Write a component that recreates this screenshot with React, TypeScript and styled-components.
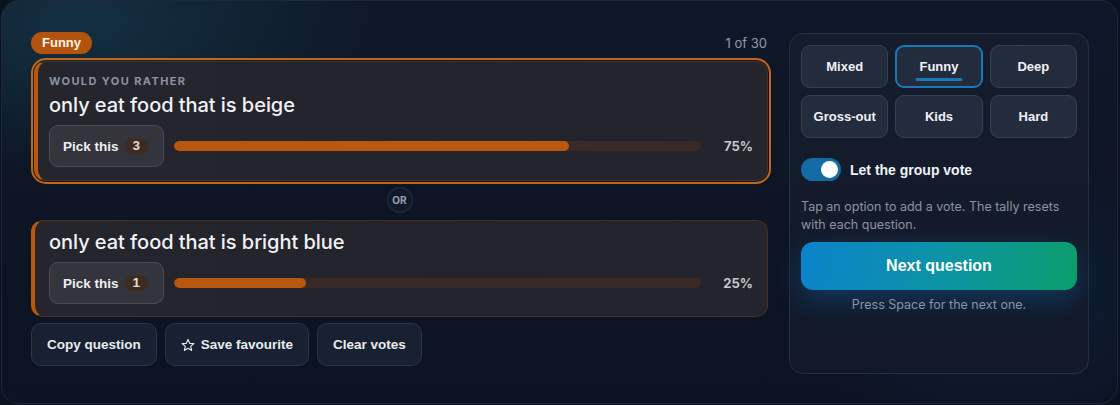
import React from "react";
import styled, { createGlobalStyle } from "styled-components";

const Global = createGlobalStyle`
  html, body { margin: 0; padding: 0; background: #0c1320; }
  body { font-family: "Liberation Sans", Arial, sans-serif; width: 1120px; height: 405px; overflow: hidden; }
  * { box-sizing: border-box; }
`;

const Shell = styled.div`
  margin-left: 1px;
  width: 1117px;
  height: 404px;
  border: 1px solid #1e2838;
  border-radius: 18px;
  background:
    radial-gradient(ellipse 420px 220px at 80px 20px, rgba(24, 78, 96, 0.45), transparent 70%),
    radial-gradient(ellipse 300px 200px at 1000px 300px, rgba(16, 60, 100, 0.25), transparent 70%),
    linear-gradient(180deg, #0f1828 0%, #0c1322 100%);
  padding: 31px 28px 0 29px;
  display: grid;
  grid-template-columns: 1fr 300px;
  column-gap: 21px;
  align-items: start;
`;

const LeftCol = styled.div`
  display: flex;
  flex-direction: column;
`;

const Header = styled.div`
  display: flex;
  justify-content: space-between;
  align-items: center;
  height: 22px;
`;

const Pill = styled.span`
  background: #b4530e;
  color: #fff5ec;
  font-weight: 700;
  font-size: 13px;
  height: 22px;
  line-height: 22px;
  padding: 0 11px;
  border-radius: 11px;
`;

const Counter = styled.span`
  font-family: Inter, sans-serif;
  font-size: 13px;
  color: #9099a8;
  padding-right: 1px;
`;

const OptionCard = styled.div<{ $selected?: boolean }>`
  background: linear-gradient(90deg, #24252d 0%, #22232b 60%, #23242c 100%);
  border: 1px solid ${(p) => (p.$selected ? "#4a3222" : "#4a3122")};
  border-left: 4px solid #b9590f;
  border-radius: 12px;
  padding: ${(p) => (p.$selected ? "12px 14px 13px 11px" : "10px 14px 12px 14px")};
  margin: ${(p) => (p.$selected ? "7px 0 0 3px" : "0")};
  outline: ${(p) => (p.$selected ? "2px solid #c4651c" : "none")};
  outline-offset: 1px;
  display: flex;
  flex-direction: column;
`;

const Eyebrow = styled.div`
  font-family: Inter, sans-serif;
  font-size: 11px;
  font-weight: 700;
  letter-spacing: 1.4px;
  color: #8a93a3;
  line-height: 14px;
  margin-bottom: 6px;
`;

const Question = styled.div`
  font-family: Inter, sans-serif;
  font-weight: 500;
  font-size: 20px;
  line-height: 22px;
  color: #f1f2f5;
  letter-spacing: -0.05px;
  margin-bottom: 9px;
`;

const VoteRow = styled.div`
  display: flex;
  align-items: center;
`;

const PickButton = styled.button`
  width: 115px;
  height: 42px;
  background: #33343c;
  border: 1px solid #4a4b54;
  border-radius: 9px;
  color: #eef0f3;
  font-family: "Liberation Sans", Arial, sans-serif;
  font-weight: 700;
  font-size: 13.5px;
  display: flex;
  align-items: center;
  padding: 0 0 0 13px;
  gap: 6px;
`;

const Count = styled.span`
  background: #3e2c22;
  color: #eadacb;
  font-size: 13.5px;
  font-weight: 700;
  border-radius: 8px;
  height: 16px;
  line-height: 16px;
  padding: 0 8px;
`;

const Track = styled.div`
  flex: 1;
  height: 10px;
  border-radius: 5px;
  background: #3a2a26;
  margin-left: 10px;
  overflow: hidden;
`;

const Fill = styled.div`
  height: 100%;
  background: #b8570e;
  border-radius: 5px;
`;

const Percent = styled.span`
  width: 52px;
  text-align: right;
  font-family: Inter, sans-serif;
  font-weight: 700;
  font-size: 13px;
  color: #c3c7cf;
`;

const OrRow = styled.div`
  display: flex;
  justify-content: center;
  margin: 6px 0 7px;
`;

const OrBadge = styled.div`
  width: 26px;
  height: 26px;
  border-radius: 50%;
  border: 1px solid #253046;
  background: #111a2a;
  color: #98a1b1;
  font-family: Inter, sans-serif;
  font-weight: 700;
  font-size: 10px;
  display: flex;
  align-items: center;
  justify-content: center;
`;

const Actions = styled.div`
  display: flex;
  gap: 8px;
  margin-top: 6px;
`;

const ActionButton = styled.button`
  height: 43px;
  padding: 0 15px;
  background: #172131;
  border: 1px solid #2b3546;
  border-radius: 10px;
  color: #e9ebef;
  font-family: "Liberation Sans", Arial, sans-serif;
  font-weight: 700;
  font-size: 13.5px;
  display: flex;
  align-items: center;
  gap: 6px;
`;

const Panel = styled.div`
  margin-top: 1px;
  height: 341px;
  border: 1px solid #243043;
  border-radius: 14px;
  background: linear-gradient(180deg, #151d2d 0%, #121a2a 100%);
  padding: 11px 11px;
  display: flex;
  flex-direction: column;
`;

const CategoryGrid = styled.div`
  display: grid;
  grid-template-columns: repeat(3, 1fr);
  gap: 7px;
`;

const CategoryButton = styled.button<{ $active?: boolean }>`
  position: relative;
  height: 43px;
  background: #232c3c;
  border: ${(p) => (p.$active ? "2px solid #1b79b8" : "1px solid #354053")};
  border-radius: 9px;
  color: #f0f2f5;
  font-family: "Liberation Sans", Arial, sans-serif;
  font-weight: 700;
  font-size: 13px;
`;

const ActiveBar = styled.span`
  position: absolute;
  left: 50%;
  bottom: 5px;
  transform: translateX(-50%);
  width: 47px;
  height: 3px;
  border-radius: 2px;
  background: #1b79b8;
`;

const ToggleRow = styled.label`
  display: flex;
  align-items: center;
  gap: 9px;
  margin-top: 20px;
  color: #f1f2f5;
  font-family: "Liberation Sans", Arial, sans-serif;
  font-weight: 700;
  font-size: 14px;
`;

const Switch = styled.span`
  width: 40px;
  height: 23px;
  border-radius: 12px;
  background: #136aa5;
  display: flex;
  align-items: center;
  justify-content: flex-end;
  padding: 0 3px;
`;

const Knob = styled.span`
  width: 17px;
  height: 17px;
  border-radius: 50%;
  background: #ffffff;
`;

const Help = styled.p`
  margin: 17px 0 0;
  font-family: Inter, sans-serif;
  font-size: 12.5px;
  line-height: 18px;
  color: #8b94a4;
`;

const NextButton = styled.button`
  margin-top: 8px;
  height: 48px;
  border: none;
  border-radius: 12px;
  background: linear-gradient(100deg, #0b83cb 0%, #0c93a6 50%, #0b9e6b 100%);
  color: #ffffff;
  font-family: "Liberation Sans", Arial, sans-serif;
  font-weight: 700;
  font-size: 16px;
  box-shadow: 0 10px 26px rgba(14, 110, 190, 0.35);
`;

const Hint = styled.div`
  margin-top: 6px;
  text-align: center;
  font-family: Inter, sans-serif;
  font-size: 12.5px;
  line-height: 18px;
  color: #8b94a4;
`;

const Star = () => (
  <svg width="14" height="14" viewBox="0 0 24 24" fill="none" stroke="#e9ebef" strokeWidth="2" strokeLinejoin="round">
    <path d="M12 2.5l2.9 6.6 7.1.6-5.4 4.7 1.6 7-6.2-3.7-6.2 3.7 1.6-7L2 9.7l7.1-.6z" />
  </svg>
);

const options = [
  { text: "only eat food that is beige", votes: 3, pct: 75, selected: true },
  { text: "only eat food that is bright blue", votes: 1, pct: 25, selected: false },
];

const categories = ["Mixed", "Funny", "Deep", "Gross-out", "Kids", "Hard"];

export default function App() {
  const [a, b] = options;
  const renderOption = (o: typeof a) => (
    <OptionCard $selected={o.selected}>
      {o.selected && <Eyebrow>WOULD YOU RATHER</Eyebrow>}
      <Question>{o.text}</Question>
      <VoteRow>
        <PickButton>
          Pick this <Count>{o.votes}</Count>
        </PickButton>
        <Track>
          <Fill style={{ width: `${o.pct}%` }} />
        </Track>
        <Percent>{o.pct}%</Percent>
      </VoteRow>
    </OptionCard>
  );
  return (
    <>
      <Global />
      <Shell>
        <LeftCol>
          <Header>
            <Pill>Funny</Pill>
            <Counter>1 of 30</Counter>
          </Header>
          {renderOption(a)}
          <OrRow>
            <OrBadge>OR</OrBadge>
          </OrRow>
          {renderOption(b)}
          <Actions>
            <ActionButton>Copy question</ActionButton>
            <ActionButton>
              <Star /> Save favourite
            </ActionButton>
            <ActionButton>Clear votes</ActionButton>
          </Actions>
        </LeftCol>
        <Panel>
          <CategoryGrid>
            {categories.map((c) => (
              <CategoryButton key={c} $active={c === "Funny"}>
                {c}
                {c === "Funny" && <ActiveBar />}
              </CategoryButton>
            ))}
          </CategoryGrid>
          <ToggleRow>
            <Switch>
              <Knob />
            </Switch>
            Let the group vote
          </ToggleRow>
          <Help>Tap an option to add a vote. The tally resets with each question.</Help>
          <NextButton>Next question</NextButton>
          <Hint>Press Space for the next one.</Hint>
        </Panel>
      </Shell>
    </>
  );
}
